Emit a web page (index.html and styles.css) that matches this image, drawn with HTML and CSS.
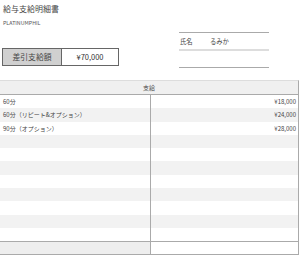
FILE: index.html
```html
<!DOCTYPE html>
<html lang="ja">
<head>
  <meta charset="UTF-8" />
  <meta name="viewport" content="width=device-width, initial-scale=1.0"/>
  <title>給与支給明細書</title>
  <link rel="stylesheet" href="styles.css">
</head>
<body>
  <div class="top">
    <div class="head-left">
      <h1 class="title">給与支給明細書</h1>
      <div class="company">PLATINUMPHIL</div>
      <div class="pay">
        <div class="pay-label">差引支給額</div>
        <div class="pay-value">¥70,000</div>
      </div>
    </div>
    <div class="name-box">
      <div class="name-row">
        <span class="name-label">氏名</span>
        <span class="name-value">るみか</span>
      </div>
      <div class="name-row blank"></div>
    </div>
  </div>

  <div class="sheet">
    <div class="sheet-head">支給</div>
    <div class="sheet-body">
      <div class="row"><span>60分</span><span class="amount">¥18,000</span></div>
      <div class="row"><span>60分（リピート&amp;オプション）</span><span class="amount">¥24,000</span></div>
      <div class="row"><span>90分（オプション）</span><span class="amount">¥28,000</span></div>
      <div class="row"><span></span><span class="amount"></span></div>
      <div class="row"><span></span><span class="amount"></span></div>
      <div class="row"><span></span><span class="amount"></span></div>
      <div class="row"><span></span><span class="amount"></span></div>
      <div class="row"><span></span><span class="amount"></span></div>
      <div class="row"><span></span><span class="amount"></span></div>
      <div class="row"><span></span><span class="amount"></span></div>
      <div class="row"><span></span><span class="amount"></span></div>
    </div>
    <div class="sheet-foot"><span></span><span class="amount"></span></div>
  </div>
</body>
</html>
```

FILE: styles.css
```css
body {
  font-family: "Noto Sans CJK JP", "Liberation Sans", sans-serif;
  margin: 0;
  padding: 0;
  background: #fff;
  color: #444;
  width: 300px;
}

.top {
  display: flex;
  justify-content: space-between;
  height: 80px;
}

.head-left {
  padding: 2px 0 0 2px;
}

.title {
  margin: 0 0 0 1px;
  font-size: 8px;
  font-weight: normal;
  line-height: 14px;
  color: #444;
}

.company {
  margin: 4px 0 0 1px;
  font-size: 5.3px;
  line-height: 6px;
  color: #555;
}

.pay {
  display: flex;
  margin-top: 22px;
  height: 18px;
  border: 1px solid #666;
  box-sizing: border-box;
  width: 117px;
}

.pay-label {
  width: 58px;
  background: #d0d0d0;
  border-right: 1px solid #666;
  font-size: 7.8px;
  line-height: 16px;
  text-align: center;
  color: #444;
}

.pay-value {
  flex: 1;
  font-size: 7.5px;
  line-height: 16px;
  text-align: center;
  color: #333;
}

.name-box {
  width: 90px;
  margin: 32px 31px 0 0;
  border-top: 1px solid #aaa;
}

.name-row {
  height: 16px;
  border-bottom: 2px solid #ddd;
  display: flex;
  align-items: center;
  font-size: 6.3px;
}

.name-row.blank {
  border-bottom: 1px solid #aaa;
}

.name-label {
  width: 30px;
  padding-left: 1px;
}

.sheet {
  width: 298px;
  border-right: 1px solid #aaa;
  border-top: 1px solid #ddd;
  font-size: 6px;
}

.sheet-head {
  background: #f0f0f0;
  height: 13px;
  line-height: 13px;
  text-align: center;
  border-bottom: 1px solid #aaa;
}

.row,
.sheet-foot {
  display: grid;
  grid-template-columns: 150px 148px;
  height: 13.3px;
  line-height: 13.3px;
}

.row span,
.sheet-foot span {
  padding: 0 2px 0 3px;
  white-space: nowrap;
}

.row .amount,
.sheet-foot .amount {
  border-left: 1px solid #aaa;
  text-align: right;
}

.row:nth-child(even) {
  background: #f2f2f2;
}

.sheet-foot {
  border-top: 1px solid #aaa;
  border-bottom: 1px solid #aaa;
  height: 12px;
}

.sheet-foot span:first-child {
  background: #eee;
}
```
